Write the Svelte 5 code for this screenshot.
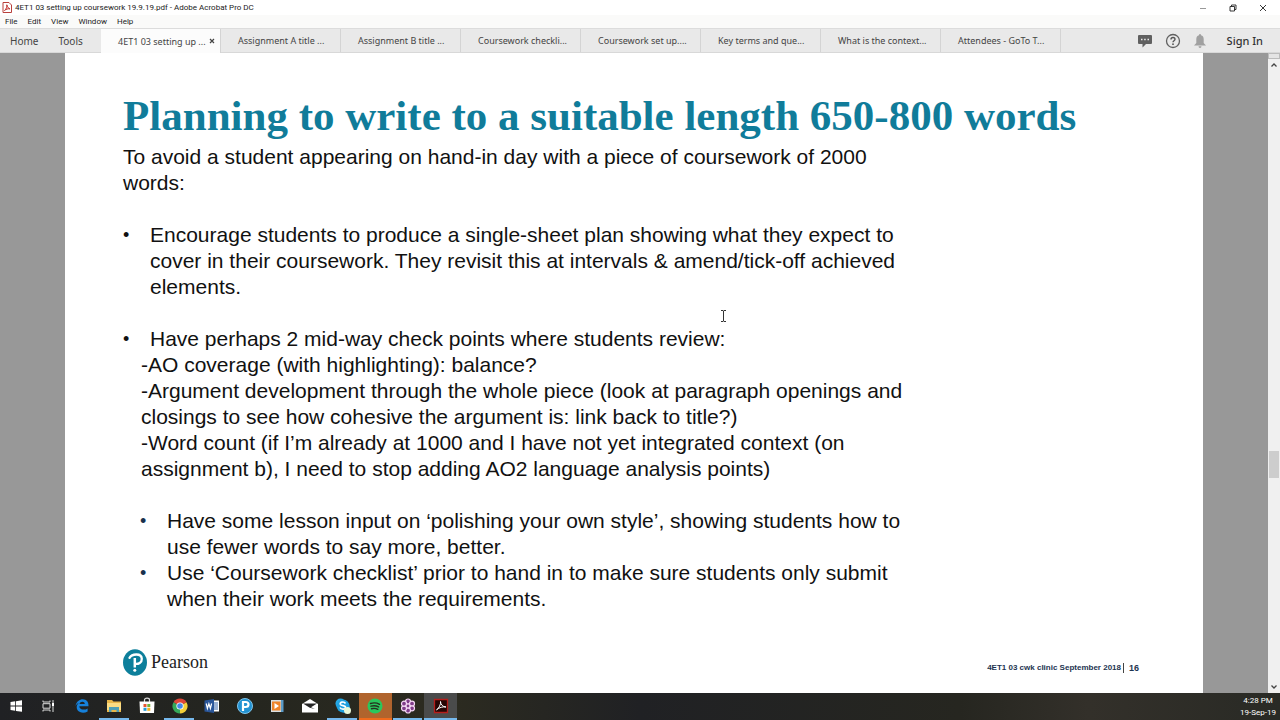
<script>
	const menus = ['File', 'Edit', 'View', 'Window', 'Help'];

	const tabs = [
		'4ET1 03 setting up ...',
		'Assignment A title ...',
		'Assignment B title ...',
		'Coursework checkli...',
		'Coursework set up....',
		'Key terms and que...',
		'What is the context...',
		'Attendees - GoTo T...'
	];

	const apps = [
		{ id: 'start', label: 'Start' },
		{ id: 'tasks', label: 'Task View' },
		{ id: 'edge', label: 'Edge' },
		{ id: 'files', label: 'File Explorer', open: true },
		{ id: 'store', label: 'Store' },
		{ id: 'chrome', label: 'Chrome', open: true },
		{ id: 'word', label: 'Word' },
		{ id: 'pandora', label: 'P' },
		{ id: 'player', label: 'Media Player' },
		{ id: 'mail', label: 'Mail' },
		{ id: 'skype', label: 'Skype', open: true },
		{ id: 'spotify', label: 'Spotify', alert: true },
		{ id: 'goto', label: 'GoTo', open: true },
		{ id: 'acrobat', label: 'Acrobat', open: true, current: true }
	];

	let active = $state(0);
</script>

<div class="window">
	<header class="titlebar">
		<svg class="pdf" viewBox="0 0 10 11">
			<path d="M1 .5h6l2.500 2.500v7.500H1z" fill="#fff" stroke="#b8403c" />
			<path d="M2.500 8.500C4.500 7 5 4.500 4.800 2.800c1 3 2 4 3.200 4-2-.3-4 .4-5.500 1.700z" fill="none" stroke="#c0302c" />
		</svg>
		<span class="name">4ET1 03 setting up coursework 19.9.19.pdf - Adobe Acrobat Pro DC</span>
		<div class="controls">
			<button aria-label="Minimise"><svg viewBox="0 0 8 8"><path d="M1 4.500h6" stroke="#999" /></svg></button>
			<button aria-label="Restore"><svg viewBox="0 0 8 8"><path d="M1 2.500h4.500V7H1zM2.500 2.500V1H7v4.500H5.500" fill="none" stroke="#222" stroke-width=".9" /></svg></button>
			<button aria-label="Close"><svg viewBox="0 0 8 8"><path d="M1 1l6 6M7 1L1 7" stroke="#222" stroke-width=".9" /></svg></button>
		</div>
	</header>

	<nav class="menu">
		{#each menus as item}
			<button>{item}</button>
		{/each}
	</nav>

	<div class="tabbar">
		<div class="fixed">
			<button>Home</button>
			<button>Tools</button>
		</div>
		<div class="tabs">
			{#each tabs as tab, i}
				<div class="tab" class:active={active === i}>
					<button class="pick" onclick={() => (active = i)}>{tab}</button>
					{#if active === i}
						<button class="close" aria-label="Close tab">
							<svg viewBox="0 0 6 6"><path d="M1 1l4 4M5 1L1 5" stroke="#444" stroke-width="1.200" /></svg>
						</button>
					{/if}
				</div>
			{/each}
		</div>
		<div class="account">
			<button aria-label="Comments">
				<svg width="14" height="14" viewBox="0 0 14 14">
					<path d="M1 1h12q1 0 1 1v7q0 1-1 1H8l-3.500 3.500V10H1q-1 0-1-1V2q0-1 1-1z" fill="#606060" />
					<path d="M3 5.500h1.500M6.200 5.500h1.500M9.500 5.500H11" stroke="#eee" stroke-width="1.500" />
				</svg>
			</button>
			<button aria-label="Help">
				<svg width="16" height="16" viewBox="0 0 16 16">
					<circle cx="8" cy="8" r="6.500" fill="none" stroke="#606060" stroke-width="1.300" />
					<path d="M6 6.500c0-2.700 4-2.700 4-.3 0 1.600-2 1.500-2 3.100" fill="none" stroke="#555" stroke-width="1.400" />
					<circle cx="8" cy="11.200" r=".9" fill="#555" />
				</svg>
			</button>
			<button aria-label="Notifications">
				<svg width="12" height="14" viewBox="0 0 12 14">
					<path d="M6 0q1 0 1 1.300 2.700.7 2.700 4V9L12 11.500H0L2.300 9V5.300q0-3.300 2.700-4Q5 0 6 0zM4.500 12.300h3Q7.500 14 6 14t-1.500-1.700z" fill="#a0a0a0" />
				</svg>
			</button>
			<button class="signin">Sign In</button>
		</div>
	</div>

	<main class="viewer">
		<article class="page">
			<h1>Planning to write to a suitable length 650-800 words</h1>
			<div class="text">
				<p>To avoid a student appearing on hand-in day with a piece of coursework of 2000<br />words:</p>
				<ul>
					<li>
						Encourage students to produce a single-sheet plan showing what they expect to<br />
						cover in their coursework. They revisit this at intervals &amp; amend/tick-off achieved<br />
						elements.
					</li>
					<li>Have perhaps 2 mid-way check points where students review:</li>
				</ul>
				<div class="notes">
					<p>-AO coverage (with highlighting): balance?</p>
					<p>-Argument development through the whole piece (look at paragraph openings and<br />closings to see how cohesive the argument is: link back to title?)</p>
					<p>-Word count (if I’m already at 1000 and I have not yet integrated context (on<br />assignment b), I need to stop adding AO2 language analysis points)</p>
				</div>
				<ul class="inner">
					<li>
						Have some lesson input on ‘polishing your own style’, showing students how to<br />
						use fewer words to say more, better.
					</li>
					<li>
						Use ‘Coursework checklist’ prior to hand in to make sure students only submit<br />
						when their work meets the requirements.
					</li>
				</ul>
			</div>
			<footer>
				<div class="brand">
					<svg width="25" height="27" viewBox="0 0 25 27">
						<ellipse cx="12" cy="13.500" rx="12" ry="13.200" fill="#0d7f9b" />
						<path d="M6.500 8.800C9 4.500 18.500 4 18.800 9.700c.2 4-3.500 5.600-6.500 5.200" fill="none" stroke="#fff" stroke-width="2.300" stroke-linecap="round" />
						<path d="M11.800 9v9.500" stroke="#fff" stroke-width="2.500" />
						<circle cx="11.800" cy="21.300" r="1.500" fill="#fff" />
					</svg>
					<span>Pearson</span>
				</div>
				<div class="info"><span>4ET1 03 cwk clinic September 2018</span><b>16</b></div>
			</footer>
			<svg class="cursor" width="7" height="12" viewBox="0 0 7 12">
				<path d="M1 .5h2l.5.500.5-.5h2M3.500 1v10M1 11.500h2l.5-.5.5.500h2" fill="none" stroke="#333" />
			</svg>
		</article>
		<div class="scroll">
			<span class="split"></span>
			<button aria-label="Scroll up"><svg viewBox="0 0 8 6"><path d="M1.500 4.500L4 2l2.500 2.500" /></svg></button>
			<span class="track"><span class="thumb"></span></span>
			<button aria-label="Scroll down"><svg viewBox="0 0 8 6"><path d="M1.500 1.500L4 4l2.500-2.500" /></svg></button>
		</div>
	</main>

	<div class="taskbar">
		<div class="apps">
			{#each apps as app}
				<button aria-label={app.label} class:open={app.open} class:alert={app.alert} class:current={app.current}>
					<svg width="18" height="18" viewBox="0 0 18 18">
						{#if app.id === 'start'}
							<path d="M3.500 5l4.700-.7v4.300H3.500zM9 4.200l6-.9v5.300H9zM3.500 9.400h4.700v4.400l-4.700-.7zM9 9.400h6v5.400l-6-.9z" fill="#fff" />
						{:else if app.id === 'tasks'}
							<path d="M3 3.500v1.500h7V3.500M3 14.500V13h7v1.500M3 6.700h7v4.500H3zM13 3v12" fill="none" stroke="#ddd" />
							<path d="M12 6h2v3h-2z" fill="#fff" />
						{:else if app.id === 'edge'}
							<path d="M2.500 9C3.500 4.500 6.500 2.300 9.800 2.300c4 0 6 3 5.700 6.900H6.300c.2 3.800 5.300 4.200 8.300 2.200v3.100c-4.500 2.500-10.900 1-10.900-4.200 0-2 .9-3.500 2.500-4.500C4.500 6.500 3.300 7.500 2.500 9zm4-2h5.300C11.800 4.200 7.200 4 6.500 7z" fill="#1681db" fill-rule="evenodd" />
						{:else if app.id === 'files'}
							<path d="M2 3h5l1.500 1.500H16V15H2z" fill="#e8b64a" />
							<path d="M2 6h14v7H2z" fill="#fbdc83" />
							<path d="M4 10h10v5h-2.500v-2h-5v2H4z" fill="#4f9fb5" />
						{:else if app.id === 'store'}
							<path d="M6.500 5V3q0-1.800 2.500-1.800T11.500 3v2" fill="none" stroke="#ddd" stroke-width="1.200" />
							<path d="M1.500 4.500h15L16 16H2z" fill="#fff" />
							<path d="M5.500 7h3v3h-3z" fill="#e95530" /><path d="M9.300 7h3v3h-3z" fill="#75b33b" />
							<path d="M5.500 10.800h3v3h-3z" fill="#249bd6" /><path d="M9.300 10.800h3v3h-3z" fill="#f4b421" />
						{:else if app.id === 'chrome'}
							<path d="M9 9L2.500 5.200A7.500 7.500 0 0 1 15.500 5.200z" fill="#df4638" />
							<path d="M9 9h0l6.500-3.800A7.500 7.500 0 0 1 9 16.500z" fill="#f5cf38" />
							<path d="M9 9v7.500A7.500 7.500 0 0 1 2.500 5.200z" fill="#35a85a" />
							<circle cx="9" cy="9" r="3.600" fill="#fff" /><circle cx="9" cy="9" r="2.800" fill="#4688e8" />
						{:else if app.id === 'word'}
							<path d="M9 3.500h7v11H9z" fill="#fff" />
							<path d="M11 6h4M11 8h4M11 10h4M11 12h4" stroke="#3966aa" />
							<path d="M1.500 3.500L11 2v14l-9.500-1.500z" fill="#2a5699" />
							<path d="M3.200 6.500l1.200 5 1.500-4.700 1.500 4.700 1.200-5" fill="none" stroke="#fff" stroke-width="1.200" />
						{:else if app.id === 'pandora'}
							<circle cx="9" cy="9" r="7.500" fill="#2292d2" stroke="#80c6eb" />
							<path d="M7 14V5h2.500c4 0 4 5 0 5H7" fill="none" stroke="#fff" stroke-width="2.200" />
						{:else if app.id === 'player'}
							<path d="M6 3h9.500v12H6z" fill="#5b9bc7" /><path d="M3 3h10v12H3z" fill="#d9dfe2" />
							<path d="M4 4.500h8.500v9H4z" fill="#ee842a" /><path d="M6.500 6L11 9l-4.500 3z" fill="#fff" />
						{:else if app.id === 'mail'}
							<path d="M1 7l8-5 8 5v8.500H1z" fill="#fff" /><path d="M2 6.500h14L10 10.300 14 12 8.800 10.700z" fill="#242424" />
						{:else if app.id === 'skype'}
							<circle cx="6.500" cy="6.500" r="5" fill="#26a9e6" /><circle cx="11" cy="11" r="5" fill="#1689cf" /><circle cx="9" cy="9" r="6.500" fill="#1fa0df" />
							<path d="M11.500 6.500C10 4 5.500 5 6.300 7.300c.8 2 5.500.8 5.200 3.300-.3 2.300-4.500 2-5.500-.1" fill="none" stroke="#fff" stroke-width="1.700" />
							<circle cx="13.500" cy="13.500" r="3.500" fill="#e9f8d8" />
						{:else if app.id === 'spotify'}
							<circle cx="9" cy="9" r="7.500" fill="#2ac65d" />
							<path d="M4.500 6.500q5-1.500 9 .8M5 9.200q4-1.200 7.600.7M5.500 11.700q3.500-.9 6.300.6" fill="none" stroke="#26301f" stroke-width="1.400" stroke-linecap="round" />
						{:else if app.id === 'goto'}
							<g fill="#7f3b89" stroke="#f4d7f4" stroke-width="1.200">
								<circle cx="9" cy="4.500" r="2.500" /><circle cx="13" cy="6.700" r="2.500" /><circle cx="13" cy="11.300" r="2.500" />
								<circle cx="9" cy="13.500" r="2.500" /><circle cx="5" cy="11.300" r="2.500" /><circle cx="5" cy="6.700" r="2.500" />
								<circle cx="9" cy="9" r="2" />
							</g>
						{:else}
							<path d="M2.500 2.500h13v13h-13z" fill="#250605" stroke="#b51e1b" stroke-width="1.300" />
							<path d="M4.500 12.800C7 11.500 9 7 8.500 4.500c0 3 2.500 5.500 5.500 5.500-3-.5-6.500.3-9.500 2.800z" fill="none" stroke="#fff" />
						{/if}
					</svg>
				</button>
			{/each}
		</div>
		<div class="clock"><span>4:28 PM</span><span>19-Sep-19</span></div>
	</div>
</div>

<style>
	:global(body) {
		margin: 0;
	}

	button {
		padding: 0;
		border: 0;
		background: none;
		font: inherit;
		color: inherit;
	}

	.window {
		display: flex;
		flex-direction: column;
		min-height: 100vh;
		background: #fff;
		font-family: 'Noto Sans', 'Open Sans', sans-serif;
		color: #222;
	}

	.titlebar {
		display: flex;
		align-items: center;
		height: 15px;
		padding: 0 13px 0 2px;
		font-family: Roboto, sans-serif;
		font-size: 8px;
		line-height: 15px;
	}

	.pdf {
		width: 10px;
		height: 11px;
		margin-right: 3px;
	}

	.controls {
		display: flex;
		gap: 22px;
		margin-left: auto;
	}

	.controls button {
		display: flex;
		width: 8px;
	}

	.controls svg {
		width: 8px;
		height: 8px;
	}

	.menu {
		display: flex;
		gap: 10px;
		height: 13px;
		padding-left: 5px;
		background: #fafaf9;
		font-family: Roboto, sans-serif;
		font-size: 8px;
		line-height: 13px;
	}

	.tabbar {
		display: flex;
		box-sizing: border-box;
		height: 25px;
		border-top: 1px solid #dcdcdc;
		border-bottom: 1px solid #d8d8d8;
		background: #e9e9e9;
		color: #444;
	}

	.fixed {
		display: flex;
		gap: 20px;
		width: 91px;
		padding-left: 10px;
		font-size: 10px;
	}

	.tabs {
		display: flex;
		flex: 1;
		font-size: 9px;
	}

	.tab {
		display: flex;
		align-items: center;
		box-sizing: border-box;
		width: 120px;
		padding-left: 17px;
		border-right: 1px solid #d4d4d4;
	}

	.tab.active {
		margin-bottom: -1px;
		background: #fcfcfc;
	}

	.pick {
		white-space: nowrap;
	}

	.close {
		display: flex;
		margin: 0 5px 0 auto;
	}

	.close svg {
		width: 6px;
		height: 6px;
	}

	.account {
		display: flex;
		align-items: center;
		gap: 13px;
		padding-right: 17px;
		font-size: 11px;
	}

	.account button {
		display: flex;
	}

	.account .signin {
		margin-left: 8px;
		font-weight: 500;
		color: #333;
	}

	.viewer {
		display: grid;
		flex: 1;
		grid-template-columns: 65fr 1138fr 65fr 12px;
		background: #989898;
	}

	.page {
		position: relative;
		display: flex;
		flex-direction: column;
		grid-column: 2;
		box-sizing: border-box;
		padding: 39px 64px 17px 58px;
		background: #fff;
	}

	h1 {
		margin: 0;
		font: bold 43px/48px 'Liberation Serif', serif;
		color: #107c9a;
	}

	.text {
		margin-top: 4px;
		font-family: 'Liberation Sans', sans-serif;
		font-size: 21px;
		line-height: 26px;
		color: #111;
	}

	p {
		margin: 0;
	}

	ul {
		margin: 0;
		padding: 0;
		list-style: none;
	}

	li {
		position: relative;
		margin-top: 26px;
		padding-left: 27px;
	}

	li::before {
		content: '•';
		position: absolute;
		left: 0;
		font-size: 18px;
	}

	.notes {
		padding-left: 18px;
	}

	.inner {
		margin-top: 26px;
		padding-left: 17px;
	}

	.inner li {
		margin: 0;
	}

	.inner li::before {
		color: #18304c;
	}

	footer {
		display: flex;
		align-items: center;
		justify-content: space-between;
		margin-top: auto;
	}

	.brand {
		display: flex;
		align-items: center;
		gap: 3px;
		font: 18px/27px 'Liberation Serif', serif;
	}

	.info {
		display: flex;
		align-items: center;
		gap: 5px;
		margin-top: 10px;
		font: bold 8px/10px 'Liberation Sans', sans-serif;
		color: #1d3450;
	}

	.info span {
		padding-right: 2px;
		border-right: 1px solid #444;
	}

	.info b {
		font-size: 9px;
	}

	.cursor {
		position: absolute;
		top: 257px;
		left: 655px;
	}

	.scroll {
		display: flex;
		flex-direction: column;
		grid-column: 4;
		align-items: center;
		background: #f0f0f0;
	}

	.scroll button {
		display: flex;
		padding: 3px 0;
	}

	.scroll svg {
		width: 8px;
		height: 6px;
		fill: none;
		stroke: #444;
		stroke-width: 1.3;
	}

	.split {
		box-sizing: border-box;
		width: 100%;
		height: 6px;
		border: 1px solid #bbb;
		background: #e4e4e4;
	}

	.track {
		display: flex;
		flex: 1;
		flex-direction: column;
		width: 10px;
	}

	.track::before {
		content: '';
		flex: 381;
	}

	.track::after {
		content: '';
		flex: 203;
	}

	.thumb {
		height: 27px;
		background: #cdcdcd;
	}

	.taskbar {
		display: flex;
		justify-content: space-between;
		height: 27px;
		background: linear-gradient(90deg, #202124, #25261f 20%, #2c2b20 35%, #202124 50%, #262620 75%, #33302a 85%, #292a25);
	}

	.apps {
		display: grid;
		grid-template-columns: repeat(14, 1fr);
		width: 457px;
	}

	.apps button {
		display: flex;
		align-items: center;
		justify-content: center;
		border-bottom: 2px solid transparent;
	}

	.apps .open {
		border-image: linear-gradient(90deg, transparent 3px, #76b9ed 3px, #76b9ed 29px, transparent 29px) 2;
	}

	.apps .current {
		border-image: none;
		border-color: #76b9ed;
		background: #4a4b4b;
	}

	.apps .alert {
		border-color: #f06a1c;
		background: #b0642d;
	}

	.clock {
		display: flex;
		flex-direction: column;
		align-items: center;
		justify-content: center;
		padding-right: 4px;
		font-family: Roboto, sans-serif;
		font-size: 8px;
		line-height: 12px;
		color: #fff;
	}
</style>
